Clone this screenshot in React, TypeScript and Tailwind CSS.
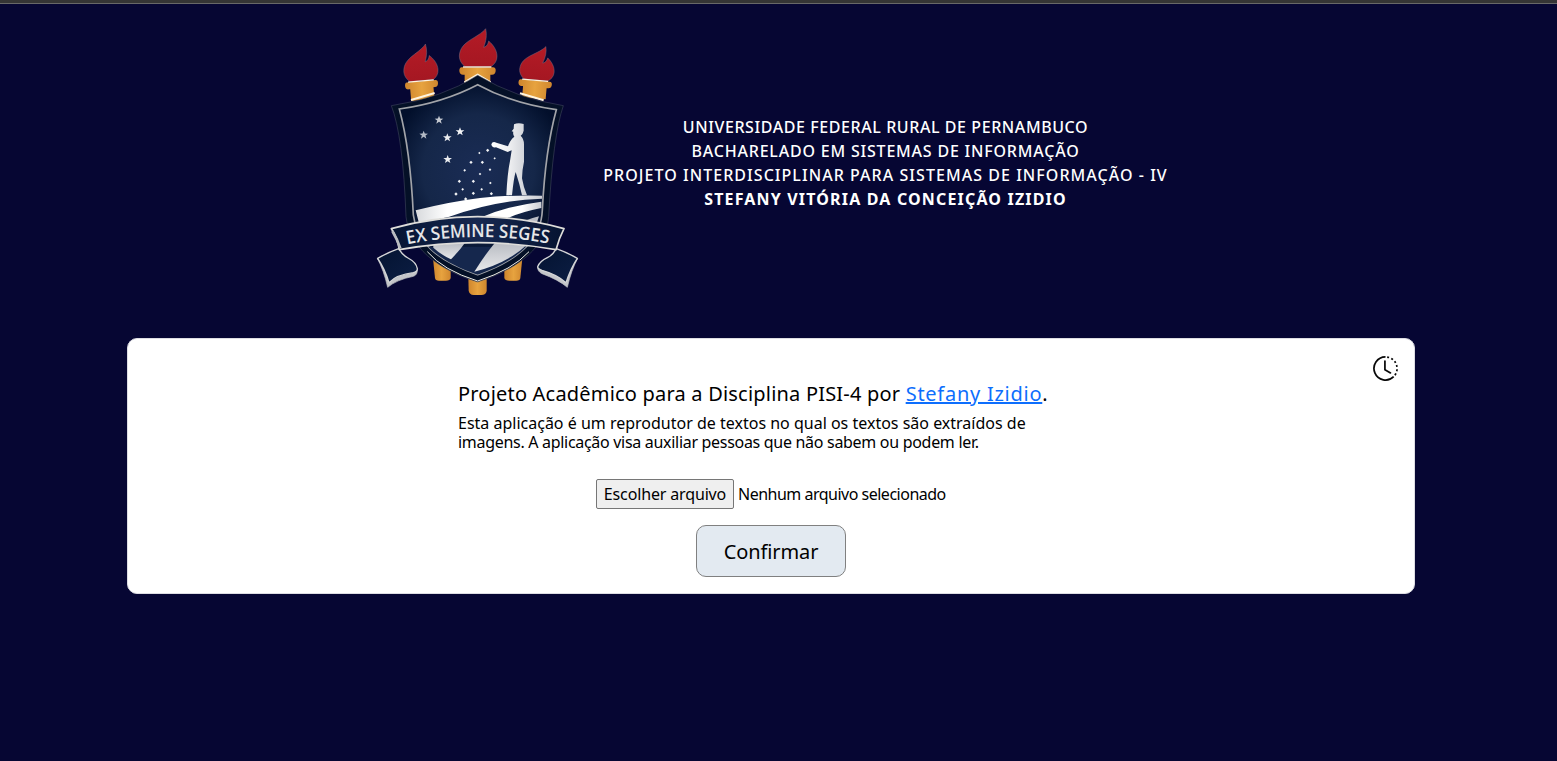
import React from "react";

const starPoints = "0,-13 3.4,-4.2 13,-4 5.4,1.8 8.2,11 0,5.6 -8.2,11 -5.4,1.8 -13,-4 -3.4,-4.2";

const stars = [
  { x: 207, y: 300, fill: "#c4c8d0" },
  { x: 161, y: 345, fill: "#b4bac5" },
  { x: 270, y: 335, fill: "#f3f4f6" },
  { x: 232, y: 353, fill: "#eceef1" },
  { x: 233, y: 418, fill: "#eceef1" },
];

const seeds = [
  [353, 391, 4], [328, 399, 2.5], [374, 415, 2.5], [303, 427, 4], [337, 427, 4],
  [284, 451, 3], [360, 449, 3], [330, 462, 3], [268, 484, 4], [310, 484, 4],
  [361, 489, 3], [278, 508, 3], [335, 508, 3], [258, 522, 4], [310, 520, 4],
  [364, 521, 4], [287, 537, 4],
];

function Torch({ transform }: { transform: string }) {
  return (
    <g transform={transform}>
      <path
        d="M-37 1C-48 -8 -54 -19 -54 -31C-53 -56 -38 -69 -15 -83C6 -96 17 -103 25 -113C29 -94 27 -78 19 -57C29 -60 32 -67 34 -76C47 -65 59 -49 59 -30C59 -15 51 -6 41 1Z"
        fill="url(#flame)"
        stroke="#7c7587"
        strokeWidth="1.4"
      />
      <path d="M-47 3H47Q56 3 55 14Q54 25 44 25H39V62H-38V25H-43Q-53 25-54 14Q-54 3-47 3Z" fill="url(#gold)" />
      <path d="M-43 2H42" stroke="#fff3df" strokeWidth="4" />
    </g>
  );
}

function Crest() {
  return (
    <svg className="h-[280px] w-[215px] shrink-0" viewBox="0 0 645 840" role="img" aria-label="Ex Semine Seges">
      <defs>
        <radialGradient id="field" gradientUnits="userSpaceOnUse" cx="325" cy="450" r="270">
          <stop offset="0" stopColor="#1a2c55" />
          <stop offset=".62" stopColor="#152749" />
          <stop offset="1" stopColor="#020f2b" />
        </radialGradient>
        <linearGradient id="gold">
          <stop offset="0" stopColor="#cf852d" />
          <stop offset=".5" stopColor="#e7a33f" />
          <stop offset="1" stopColor="#cf862e" />
        </linearGradient>
        <linearGradient id="flame" x2="0" y2="1">
          <stop offset="0" stopColor="#b41b26" />
          <stop offset="1" stopColor="#a51722" />
        </linearGradient>
        <linearGradient id="furrow">
          <stop offset="0" stopColor="#d8dadd" />
          <stop offset=".25" stopColor="#ffffff" />
          <stop offset=".7" stopColor="#ffffff" />
          <stop offset="1" stopColor="#c9ccd2" />
        </linearGradient>
        <linearGradient id="lower" x2="0" y2="1">
          <stop offset="0" stopColor="#b9bcc3" />
          <stop offset="1" stopColor="#e8e9eb" />
        </linearGradient>
        <linearGradient id="figure">
          <stop offset="0" stopColor="#ffffff" />
          <stop offset=".5" stopColor="#eeeff1" />
          <stop offset="1" stopColor="#cdd0d6" />
        </linearGradient>
        <linearGradient id="band">
          <stop offset="0" stopColor="#051331" />
          <stop offset=".5" stopColor="#172951" />
          <stop offset="1" stopColor="#051331" />
        </linearGradient>
        <linearGradient id="tail" x2="1" y2="1">
          <stop offset="0" stopColor="#041331" />
          <stop offset="1" stopColor="#0c1e44" />
        </linearGradient>
        <clipPath id="inner">
          <path d="M323 194Q425 250 559 269Q526 390 517 570C514 650 460 715 323 764C190 718 139 660 130 585Q121 390 88 267Q220 248 323 194Z" />
        </clipPath>
        <path id="motto" d="M112 673Q322 630 536 671" />
      </defs>

      <Torch transform="translate(322 139)" />
      <Torch transform="translate(153 181) rotate(-5) scale(.91 .95)" />
      <Torch transform="translate(496 179) rotate(5) scale(.92 .9)" />
      <path d="M188 705L242 735V774Q240 782 228 782H207Q196 782 195 774Z" fill="url(#gold)" />
      <path d="M458 705L403 735V774Q405 782 418 782H439Q450 782 451 774Z" fill="url(#gold)" />
      <path d="M295 770H350V813Q348 825 334 825H311Q298 824 296 812Z" fill="url(#gold)" />

      <path d="M123 240L194 219M283 187L323 164L362 187M450 220L521 241" fill="none" stroke="#fff4df" strokeWidth="6" />
      <path
        d="M323 166Q439 235 580 257Q549 346 536 590C529 678 450 745 323 786C198 747 118 680 108 590Q99 346 64 257Q215 235 323 166Z"
        fill="#041027"
        stroke="#4c5367"
        strokeWidth="1.5"
      />
      <path d="M172 695Q219 751 323 783Q428 749 477 695" fill="none" stroke="#f0eee8" strokeWidth="3" />
      <path
        d="M323 194Q425 250 559 269Q526 390 517 570C514 650 460 715 323 764C190 718 139 660 130 585Q121 390 88 267Q220 248 323 194Z"
        fill="url(#field)"
        stroke="#a2a4a9"
        strokeWidth="5"
      />

      <g clipPath="url(#inner)">
        <path d="M100 680H550V780H100Z" fill="#15274d" />
        <path d="M137 571Q240 545 330 534Q430 524 516 527V536Q377 540 238 590L147 610Z" fill="url(#furrow)" />
        <path d="M322 596Q410 558 514 545V564Q448 577 405 598Z" fill="url(#furrow)" />
        <path d="M460 604Q485 594 507 589L500 610Z" fill="#b9bdc5" />
        <path d="M190 675L285 668Q270 690 243 718Q214 705 190 683Z" fill="url(#lower)" />
        <path d="M375 668L470 675Q410 731 313 755Q345 704 375 668Z" fill="url(#lower)" />
      </g>

      {stars.map((star) => (
        <polygon key={`${star.x}-${star.y}`} points={starPoints} transform={`translate(${star.x} ${star.y})`} fill={star.fill} />
      ))}
      {seeds.map(([x, y, r]) => (
        <path key={`${x}-${y}`} d={`M${x - r - 1} ${y}L${x} ${y - r - 1}L${x + r + 1} ${y}L${x} ${y + r + 1}Z`} fill="#f3f4f6" />
      ))}
      <path
        d="M432 313Q444 307 461 312V332Q459 342 452 347Q462 356 462 373L462 425Q456 452 456 475Q460 500 471 526H456Q449 492 437 456Q431 475 426 526H409Q412 461 420 423L425 391L413 396L378 382Q365 384 364 373Q367 363 379 368L414 379Q420 360 433 350Q428 343 430 335L425 334L431 326Z"
        fill="url(#figure)"
      />

      <path d="M22 715Q41 750 53 802Q80 779 130 769Q143 765 142 747L130 757Q85 762 57 789Q43 742 22 715Z" fill="#c3c5c9" stroke="#c3c5c9" strokeWidth="2" />
      <path d="M623 715Q604 750 592 802Q565 779 516 761Q502 754 503 741L515 749Q560 762 588 789Q602 742 623 715Z" fill="#c3c5c9" stroke="#c3c5c9" strokeWidth="2" />
      <path d="M86 686Q55 697 23 715Q44 745 57 788Q80 764 130 758Q142 755 142 746Q139 727 114 714Q99 706 90 692Z" fill="url(#tail)" stroke="#d4d5d7" strokeWidth="4" strokeLinejoin="round" />
      <path d="M559 686Q590 697 622 715Q602 745 588 788Q562 764 516 751Q503 746 503 740Q509 724 532 713Q547 706 555 692Z" fill="url(#tail)" stroke="#d4d5d7" strokeWidth="4" strokeLinejoin="round" />
      <path
        d="M64 626Q193 590 323 590Q453 590 582 626Q567 655 558 689Q440 668 323 668Q206 668 88 689Q82 652 64 626Z"
        fill="url(#band)"
        stroke="#deddda"
        strokeWidth="5"
        strokeLinejoin="round"
      />
      <path d="M67 633Q83 660 91 685" fill="none" stroke="#b9bbc0" strokeWidth="8" />
      <text fill="#e6e7e9" fontFamily="'Open Sans', sans-serif" fontSize="55" fontWeight="600">
        <textPath href="#motto" textLength="426" lengthAdjust="spacingAndGlyphs">EX SEMINE SEGES</textPath>
      </text>
    </svg>
  );
}

function HistoryIcon() {
  return (
    <svg className="size-[25px]" viewBox="0 0 26 26" fill="none" stroke="#080808" strokeWidth="1.8">
      <path d="M13 1A12 12 0 1 0 21.5 21.5" />
      <path d="M13 1A12 12 0 0 1 21.5 21.5" strokeDasharray="2 2.4" strokeDashoffset="-1.8" />
      <path d="M12.4 5.3V14.2L18.2 17.6" strokeLinejoin="round" strokeLinecap="round" />
    </svg>
  );
}

export default function App() {
  return (
    <div className="flex h-[761px] w-full flex-col overflow-hidden bg-[#060633] font-['Comic_Sans_MS','Noto_Sans',sans-serif] text-base text-black">
      <div className="h-1 shrink-0 border-b border-[#686868] bg-[#353535]" />
      <div className="flex flex-col items-center pr-[15px]">
        <header className="mt-4 flex items-start pr-[3px]">
          <Crest />
          <div className="ml-[17px] mt-[95px] flex w-[568px] flex-col items-center whitespace-nowrap font-medium leading-6 text-white">
            <p className="tracking-[0.58px]">UNIVERSIDADE FEDERAL RURAL DE PERNAMBUCO</p>
            <p className="tracking-[0.8px]">BACHARELADO EM SISTEMAS DE INFORMAÇÃO</p>
            <p className="tracking-[1.05px]">PROJETO INTERDISCIPLINAR PARA SISTEMAS DE INFORMAÇÃO - IV</p>
            <p className="font-bold tracking-[1.17px]">STEFANY VITÓRIA DA CONCEIÇÃO IZIDIO</p>
          </div>
        </header>
        <main className="relative mt-[38px] flex h-64 w-[1288px] flex-col items-center rounded-[10px] border border-[#dddde3] bg-white">
          <button className="absolute right-4 top-[17px]" aria-label="Histórico">
            <HistoryIcon />
          </button>
          <section className="mt-[40px] w-[626px] whitespace-nowrap">
            <h1 className="text-xl leading-[30px] tracking-[0.2px]">
              Projeto Acadêmico para a Disciplina PISI-4 por{" "}
              <a className="tracking-[0.74px] text-[#0d6efd] underline" href="#autor">Stefany Izidio</a>.
            </h1>
            <p className="mt-[5px] leading-[19px]">
              <span>Esta aplicação é um reprodutor de textos no qual os textos são extraídos de</span>
              <br />
              <span className="tracking-[-0.3px]">imagens. A aplicação visa auxiliar pessoas que não sabem ou podem ler.</span>
            </p>
          </section>
          <div className="mt-[27px] flex w-[350px] items-center whitespace-nowrap">
            <button className="h-[30px] w-[138px] shrink-0 rounded-[2px] border border-[#767676] bg-[#efefef] tracking-[-0.15px]">Escolher arquivo</button>
            <span className="ml-1 tracking-[-0.5px]">Nenhum arquivo selecionado</span>
          </div>
          <button className="mt-4 h-[52px] w-[150px] rounded-[10px] border border-[#808080] bg-[#e3eaf1] pt-0.5 text-xl tracking-[-0.1px]">Confirmar</button>
        </main>
      </div>
    </div>
  );
}
